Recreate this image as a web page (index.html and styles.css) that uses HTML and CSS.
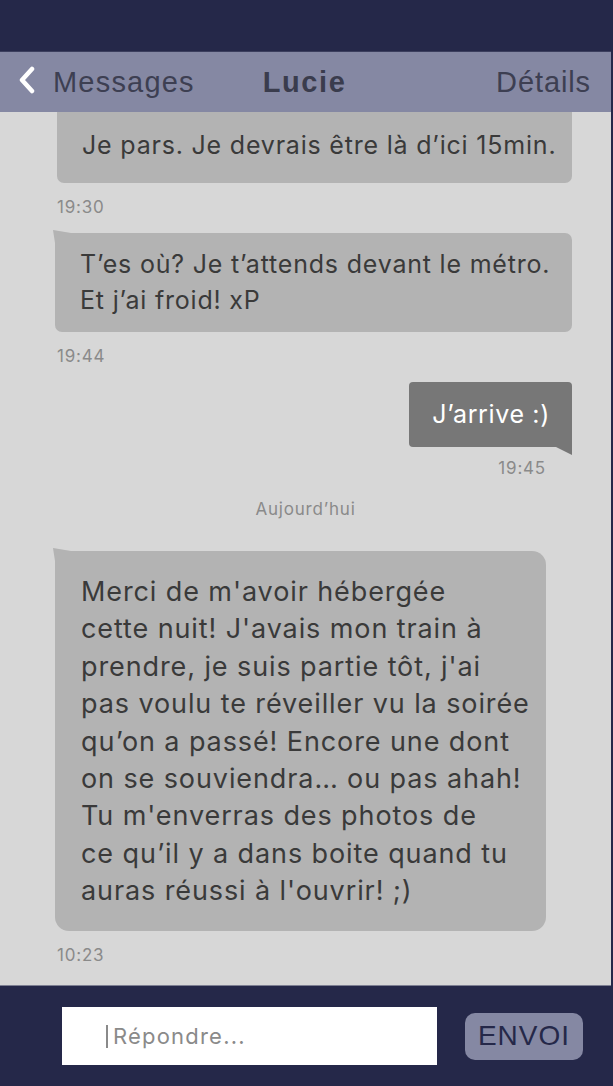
FILE: index.html
```html
<!DOCTYPE html>
<html lang="fr">
<head>
<meta charset="utf-8">
<title>Lucie</title>
<link rel="stylesheet" href="styles.css">
</head>
<body>
<div class="app">
  <div class="status"></div>
  <header class="nav">
    <div class="nav-left">
      <svg class="chev" width="20" height="30" viewBox="0 0 20 30"><polyline points="14,3 4,14 14,25" fill="none" stroke="#ffffff" stroke-width="4.5" stroke-linecap="round" stroke-linejoin="round"/></svg>
      <span>Messages</span>
    </div>
    <div class="nav-title">Lucie</div>
    <div class="nav-right">Détails</div>
  </header>
  <main class="thread">
    <div class="bubble in first">Je pars. Je devrais être là d’ici 15min.</div>
    <div class="time">19:30</div>
    <div class="bubble in tail">T’es où? Je t’attends devant le métro.<br>Et j’ai froid! xP</div>
    <div class="time">19:44</div>
    <div class="out-row">
      <div class="bubble out">J’arrive :)</div>
      <div class="time right">19:45</div>
    </div>
    <div class="day">Aujourd’hui</div>
    <div class="bubble in tail big">Merci de m'avoir hébergée<br>cette nuit! J'avais mon train à<br>prendre, je suis partie tôt, j'ai<br>pas voulu te réveiller vu la soirée<br>qu’on a passé! Encore une dont<br>on se souviendra… ou pas ahah!<br>Tu m'enverras des photos de<br>ce qu’il y a dans boite quand tu<br>auras réussi à l'ouvrir! ;)</div>
    <div class="time">10:23</div>
  </main>
  <footer class="composer">
    <div class="input"><span class="caret"></span><span class="ph">Répondre...</span></div>
    <div class="send">ENVOI</div>
  </footer>
</div>
</body>
</html>
```

FILE: styles.css
```css
* { box-sizing: border-box; }
html, body {
  margin: 0;
  padding: 0;
  width: 613px;
  height: 1086px;
  overflow: hidden;
  background: #252849;
}
.app {
  width: 611px;
  height: 1086px;
  display: flex;
  flex-direction: column;
  font-family: "Inter", "Noto Sans", sans-serif;
}
.status {
  height: 52px;
  background: #252849;
  border-bottom: 1px solid #3c3f5e;
  flex: none;
}
.nav {
  height: 60px;
  flex: none;
  background: #8588a3;
  display: grid;
  grid-template-columns: 1fr auto 1fr;
  align-items: center;
  padding: 0 20px 0 18px;
  font-family: "Liberation Sans", Arial, sans-serif;
  font-size: 29px;
  color: #3d3f52;
  letter-spacing: 1.2px;
}
.nav-left {
  display: flex;
  align-items: center;
  gap: 15px;
}
.chev { display: block; margin-top: -2px; }
.nav-title {
  font-weight: bold;
  letter-spacing: 1.6px;
  color: #3a3c4d;
}
.nav-right { text-align: right; letter-spacing: 0.9px; }
.thread {
  flex: 1;
  background: #d7d7d7;
  overflow: hidden;
  display: flex;
  flex-direction: column;
  align-items: flex-start;
}
.bubble {
  background: #b3b3b3;
  color: #3a3a3a;
  font-size: 25px;
  line-height: 36px;
  letter-spacing: 0.8px;
  white-space: nowrap;
  position: relative;
}
.bubble.in {
  margin-left: 55px;
  width: 517px;
  padding: 13px 20px 14px 25px;
  border-radius: 7px;
}
.bubble.first {
  margin-left: 57px;
  width: 515px;
  padding: 15px 20px 20px 25px;
  border-radius: 0 0 7px 7px;
}
.bubble.tail { border-top-left-radius: 0; }
.bubble.tail::before {
  content: "";
  position: absolute;
  left: -2px;
  top: -3px;
  width: 18px;
  height: 14px;
  background: #b3b3b3;
  clip-path: polygon(0 0, 100% 22%, 100% 100%, 12% 100%);
}
.bubble.big {
  width: 491px;
  font-size: 27px;
  line-height: 37.4px;
  letter-spacing: 0.9px;
  padding: 22px 10px 21px 26px;
  border-radius: 0 14px 14px 14px;
}
.time {
  font-size: 17px;
  line-height: 20px;
  letter-spacing: 0.8px;
  color: #8a8a8a;
  margin: 14px 0 16px 57px;
}
.out-row {
  align-self: stretch;
  display: flex;
  flex-direction: column;
  align-items: flex-end;
  padding-right: 39px;
}
.bubble.out {
  background: #777777;
  color: #ffffff;
  letter-spacing: 0.65px;
  padding: 14px 22px 15px 23px;
  border-radius: 4px 4px 0 4px;
}
.bubble.out::after {
  content: "";
  position: absolute;
  right: 0;
  bottom: -8px;
  width: 16px;
  height: 8px;
  background: #777777;
  clip-path: polygon(0 0, 100% 0, 100% 100%);
}
.time.right {
  margin: 11px 26px 0 0;
}
.day {
  align-self: center;
  font-size: 17px;
  line-height: 20px;
  letter-spacing: 0.8px;
  color: #8a8a8a;
  margin: 21px 0 32px 0;
}
.composer {
  height: 101px;
  flex: none;
  background: #252849;
  border-top: 1px solid #7d7f92;
  display: flex;
  align-items: center;
  padding-left: 62px;
  gap: 28px;
}
.input {
  width: 375px;
  height: 58px;
  background: #ffffff;
  display: flex;
  align-items: center;
  padding-left: 44px;
}
.caret {
  width: 2px;
  height: 23px;
  background: #8a8a8a;
  margin-right: 5px;
}
.ph {
  font-size: 22px;
  letter-spacing: 1.2px;
  color: #8a8a8a;
}
.send {
  width: 118px;
  height: 47px;
  border-radius: 10px;
  background: #8588a3;
  color: #252849;
  font-family: "Liberation Sans", Arial, sans-serif;
  font-size: 28px;
  letter-spacing: 1px;
  display: flex;
  align-items: center;
  justify-content: center;
}
```
